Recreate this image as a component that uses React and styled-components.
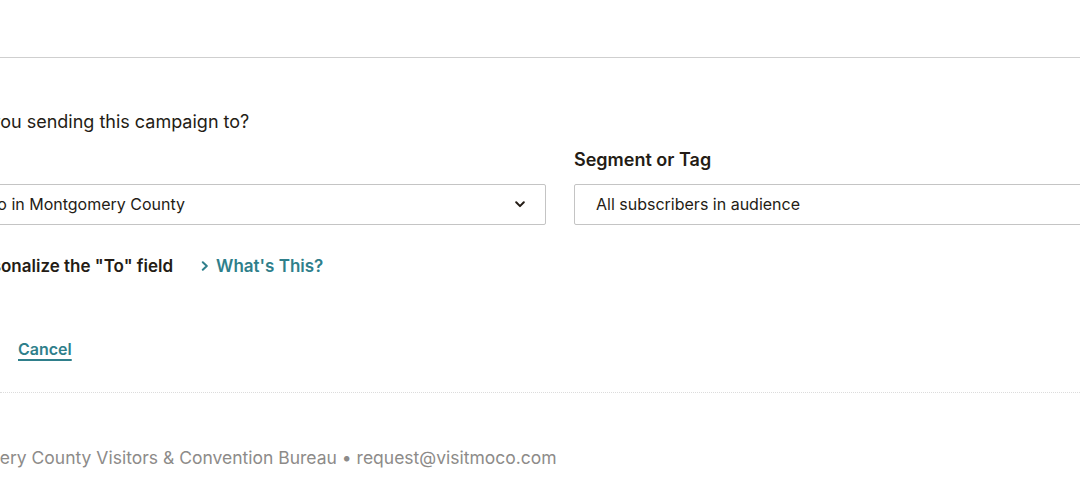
import React from 'react';
import styled, { createGlobalStyle } from 'styled-components';

const teal = '#2f7f8b';

const GlobalStyle = createGlobalStyle`
  html, body {
    margin: 0;
    padding: 0;
    background: #fff;
    overflow: hidden;
  }
  body {
    font-family: Inter, "Noto Sans", Arial, sans-serif;
    color: #241c15;
    -webkit-font-smoothing: antialiased;
  }
`;

const Header = styled.header`
  height: 57px;
  border-bottom: 1px solid #cfcfcf;
`;

const Section = styled.section`
  padding: 52px 0 23px;
  border-bottom: 1px dotted #dcdcdc;
`;

const Content = styled.div`
  margin-left: -86px;
  width: 1300px;
`;

const Question = styled.h2`
  margin: 0 0 14px;
  font-size: 18px;
  line-height: 24px;
  font-weight: 400;
  color: #241c15;
`;

const Fields = styled.div`
  display: grid;
  grid-template-columns: 632px 632px;
  column-gap: 28px;
`;

const Field = styled.div`
  display: flex;
  flex-direction: column;
`;

const Label = styled.label`
  margin-bottom: 12px;
  font-size: 18px;
  line-height: 24px;
  font-weight: 600;
  color: #241c15;
`;

const SelectBox = styled.div`
  box-sizing: border-box;
  height: 41px;
  display: flex;
  align-items: center;
  justify-content: space-between;
  padding: 0 20px 2px 21px;
  border: 1px solid #c4c4c4;
  border-radius: 2px;
  background: #fff;
  font-size: 16px;
  color: #241c15;

  svg {
    margin-top: 2px;
  }
`;

const Personalize = styled.div`
  display: flex;
  align-items: center;
  margin-top: 29px;
  height: 24px;
`;

const Checkbox = styled.span`
  box-sizing: border-box;
  width: 22px;
  height: 22px;
  margin-right: 28px;
  border: 1px solid #8c8c8c;
  border-radius: 2px;
`;

const CheckLabel = styled.span`
  font-size: 17px;
  font-weight: 600;
  color: #241c15;
`;

const HelpLink = styled.a`
  display: inline-flex;
  align-items: center;
  gap: 7px;
  margin-left: 28px;
  font-size: 17px;
  font-weight: 600;
  color: ${teal};
  text-decoration: none;
`;

const Actions = styled.div`
  display: flex;
  align-items: center;
  margin-top: 51px;
  height: 40px;
`;

const SaveButton = styled.button`
  height: 40px;
  width: 80px;
  margin-right: 24px;
  border: none;
  border-radius: 2px;
  background: ${teal};
  color: #fff;
  font: 500 16px Inter, sans-serif;
`;

const CancelLink = styled.a`
  font-size: 16px;
  font-weight: 600;
  color: ${teal};
  text-decoration: underline;
  text-underline-offset: 4px;
  text-decoration-thickness: 1.5px;
`;

const Footer = styled.footer`
  padding-top: 53px;
  margin-left: -79px;
  font-size: 17.5px;
  line-height: 24px;
  color: #8d8b89;
  white-space: nowrap;
`;

const ChevronDown = () => (
  <svg width="10" height="7" viewBox="0 0 10 7" fill="none">
    <path d="M1.2 1.3 5 5.1l3.8-3.8" stroke="#241c15" strokeWidth="2" strokeLinecap="round" strokeLinejoin="round" />
  </svg>
);

const ChevronRight = () => (
  <svg width="8" height="10" viewBox="0 0 8 10" fill="none">
    <path d="M1.8 1.2 5.8 5l-4 3.8" stroke={teal} strokeWidth="2" strokeLinecap="round" strokeLinejoin="round" />
  </svg>
);

export default function App() {
  return (
    <>
      <GlobalStyle />
      <Header />
      <Section>
        <Content>
          <Question>Who are you sending this campaign to?</Question>
          <Fields>
            <Field>
              <Label>Audience</Label>
              <SelectBox>
                <span>Fun to do in Montgomery County</span>
                <ChevronDown />
              </SelectBox>
            </Field>
            <Field>
              <Label>Segment or Tag</Label>
              <SelectBox>
                <span>All subscribers in audience</span>
              </SelectBox>
            </Field>
          </Fields>
          <Personalize>
            <Checkbox />
            <CheckLabel>Personalize the "To" field</CheckLabel>
            <HelpLink href="#">
              <ChevronRight />
              What's This?
            </HelpLink>
          </Personalize>
          <Actions>
            <SaveButton>Save</SaveButton>
            <CancelLink href="#">Cancel</CancelLink>
          </Actions>
        </Content>
      </Section>
      <Footer>
        Montgomery County Visitors &amp; Convention Bureau • request@visitmoco.com
      </Footer>
    </>
  );
}
